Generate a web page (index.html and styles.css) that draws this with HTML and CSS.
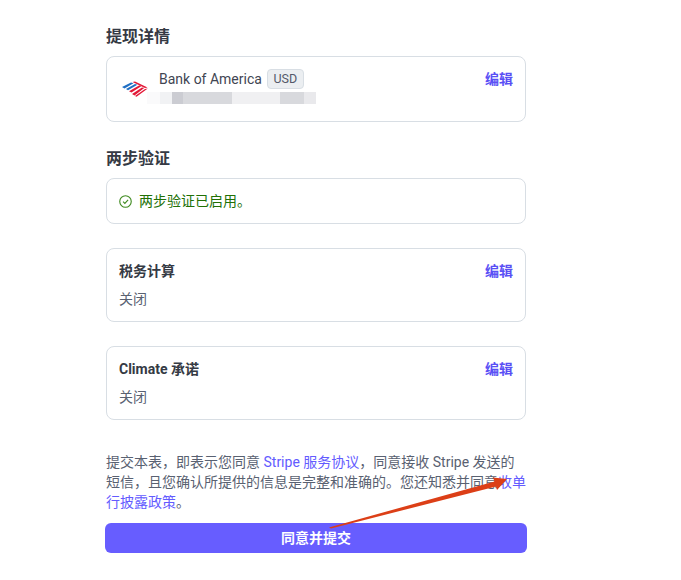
FILE: index.html
```html
<!DOCTYPE html>
<html lang="zh">
<head>
<meta charset="utf-8">
<title>提现详情</title>
<link rel="stylesheet" href="styles.css">
</head>
<body>
<main class="page">
  <h2 class="heading">提现详情</h2>
  <section class="card bank-card">
    <svg class="bank-logo" viewBox="0 0 26 16" aria-hidden="true">
      <path fill="#1f6fc4" d="M0 6 L9 1.5 L11.5 2.3 L2.5 7.5 Z M4 8 L13 3 L15.4 3.7 L6 9.2 Z"/>
      <path fill="#e31837" d="M10.5 1 L13 .6 L25.5 6.5 L23 7 Z M7 10.2 L17 4.5 L19.2 5.2 L9.5 11.6 Z M10 13 L20 6.5 L22.2 7 L12.5 14.4 Z M13 15 L23 8 L25.8 7.6 L14.5 15.8 Z"/>
    </svg>
    <div class="bank-info">
      <div class="bank-name"><span>Bank of America</span><span class="tag">USD</span></div>
      <div class="masked" aria-hidden="true">
        <i class="m1"></i><i class="m2"></i><i class="m3"></i><i class="m4"></i><i class="m5"></i><i class="m6"></i><i class="m7"></i>
      </div>
    </div>
    <a class="edit" href="#">编辑</a>
  </section>

  <h2 class="heading second">两步验证</h2>
  <section class="card status-card">
    <svg class="check" viewBox="0 0 14 14" aria-hidden="true">
      <circle cx="7" cy="7" r="6.2" fill="none" stroke="#3f8a1f" stroke-width="1.2"/>
      <path d="M4.4 7.2 L6.3 9.1 L9.8 5.2" fill="none" stroke="#3f8a1f" stroke-width="1.2"/>
    </svg>
    <span class="status-text">两步验证已启用。</span>
  </section>

  <section class="card setting-card">
    <div class="setting-row"><strong>税务计算</strong><a class="edit" href="#">编辑</a></div>
    <p class="setting-value">关闭</p>
  </section>

  <section class="card setting-card">
    <div class="setting-row"><strong>Climate 承诺</strong><a class="edit" href="#">编辑</a></div>
    <p class="setting-value">关闭</p>
  </section>

  <p class="legal">提交本表&#xFF0C;即表示您同意 <a href="#">Stripe 服务协议</a>&#xFF0C;同意接收 Stripe 发送的短信&#xFF0C;且您确认所提供的信息是完整和准确的。您还知悉并同意<a href="#">收单行披露政策</a>。</p>
  <button class="submit" type="button">同意并提交</button>
</main>
<svg class="arrow" viewBox="0 0 681 580" aria-hidden="true">
  <path fill="#dc3f17" d="M329 527.5 L494.5 481.5 L493 477.5 L507 479 L497 490 L496 486.5 L331 528.5 Z"/>
</svg>
</body>
</html>
```
FILE: styles.css
```css
html, body {
  margin: 0;
  background: #fff;
}
body {
  position: relative;
  height: 580px;
  overflow: hidden;
  font-family: Roboto, "Noto Sans CJK SC", sans-serif;
  font-size: 14px;
  color: #414552;
}
.page {
  width: 420px;
  margin-left: 106px;
  padding-top: 25px;
  display: flex;
  flex-direction: column;
}
.heading {
  margin: 0 0 7px;
  font-size: 16px;
  line-height: 24px;
  font-weight: 700;
  color: #353a44;
}
.heading.second {
  margin-top: 25px;
}
.card {
  box-sizing: border-box;
  border: 1px solid #d8dee4;
  border-radius: 8px;
  background: #fff;
}
.bank-card {
  height: 66px;
  padding: 12px 12px 0 15px;
  display: flex;
  align-items: flex-start;
}
.bank-logo {
  width: 26px;
  height: 16px;
  margin-top: 12px;
  margin-right: 11px;
  flex: none;
}
.bank-info {
  flex: 1;
}
.bank-name {
  display: flex;
  align-items: center;
  gap: 5px;
  height: 20px;
  line-height: 20px;
  color: #414552;
}
.tag {
  box-sizing: border-box;
  width: 37px;
  height: 20px;
  border: 1px solid #d8dee4;
  border-radius: 4px;
  background: #ebeef1;
  font-size: 12.5px;
  line-height: 18px;
  text-align: center;
  color: #545969;
}
.masked {
  display: flex;
  height: 12px;
  margin: 3px 0 0 -12px;
}
.masked i {
  display: block;
  height: 100%;
}
.m1 { width: 13px; background: #fafafb; }
.m2 { width: 12px; background: #f1f2f4; }
.m3 { width: 11px; background: #cbccd2; }
.m4 { width: 49px; background: #d8d9dd; }
.m5 { width: 48px; background: #f0f0f2; }
.m6 { width: 24px; background: #d8d9dd; }
.m7 { width: 12px; background: #e9e9ec; }
.edit {
  font-size: 14px;
  line-height: 20px;
  font-weight: 700;
  color: #5a4ff5;
  text-decoration: none;
}
.bank-card .edit {
  margin-left: auto;
}
.status-card {
  height: 46px;
  padding: 0 12px;
  display: flex;
  align-items: center;
  gap: 7px;
}
.check {
  width: 13px;
  height: 13px;
  flex: none;
}
.status-text {
  padding-bottom: 2px;
  color: #217005;
}
.setting-card {
  height: 74px;
  margin-top: 24px;
  padding: 12px;
}
.setting-row {
  display: flex;
  justify-content: space-between;
  line-height: 20px;
}
.setting-row strong {
  font-weight: 700;
  color: #353a44;
}
.setting-value {
  margin: 8px 0 0;
  line-height: 20px;
  color: #596171;
}
.legal {
  margin: 32px 0 0;
  line-height: 20px;
  color: #596171;
}
.legal a {
  color: #635bff;
  text-decoration: none;
}
.submit {
  width: 422px;
  height: 30px;
  margin: 11px 0 0 -1px;
  padding: 0;
  border: 0;
  border-radius: 6px;
  background: #675dff;
  color: #fff;
  font: 700 14px/30px Roboto, "Noto Sans CJK SC", sans-serif;
}
.arrow {
  position: absolute;
  left: 0;
  top: 0;
  width: 681px;
  height: 580px;
  pointer-events: none;
}
```
